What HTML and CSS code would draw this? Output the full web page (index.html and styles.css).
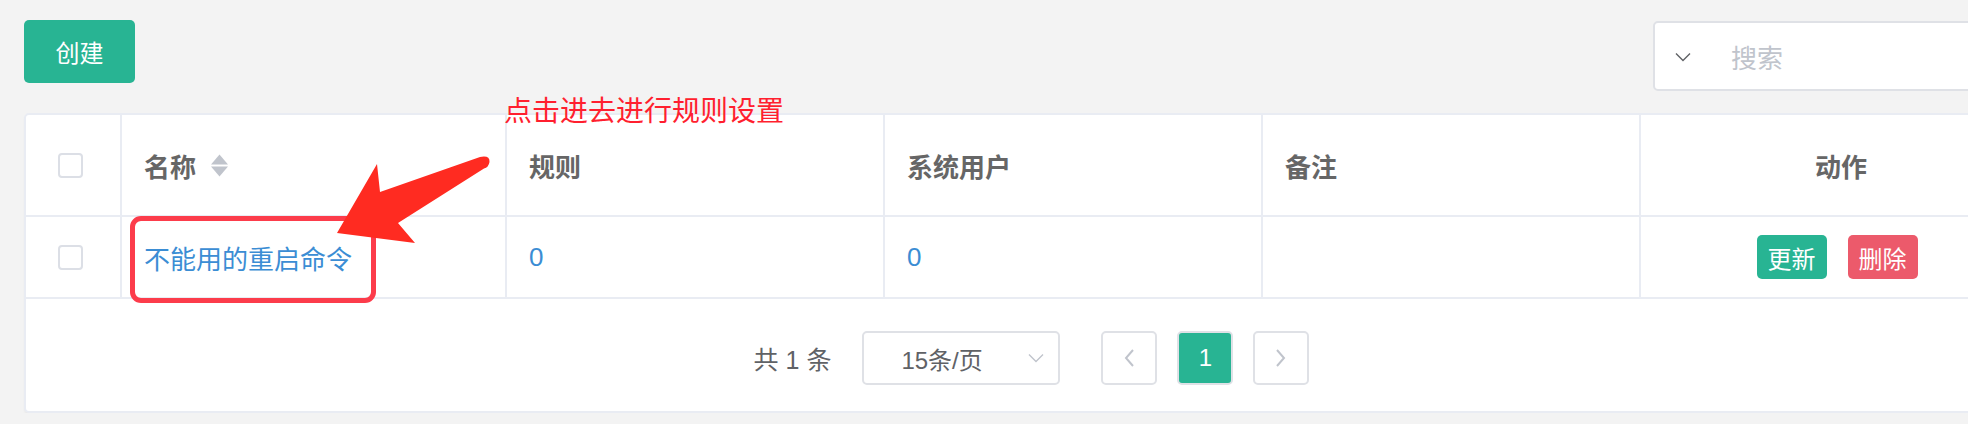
FILE: index.html
```html
<!DOCTYPE html>
<html lang="zh-CN">
<head>
<meta charset="utf-8">
<title>命令过滤</title>
<link rel="stylesheet" href="styles.css">
</head>
<body>
<div class="page">
  <div class="toolbar">
    <button class="btn-create">创建</button>
    <div class="search">
      <svg class="search-caret" width="16" height="10" viewBox="0 0 16 10"><path d="M1 1.5 L8 8.5 L15 1.5" fill="none" stroke="#606266" stroke-width="1.4"/></svg>
      <span class="search-ph">搜索</span>
    </div>
  </div>

  <div class="card">
    <div class="grid">
      <div class="th c-check"><span class="checkbox"></span></div>
      <div class="th">名称<svg class="sort" width="17" height="23" viewBox="0 0 17 23"><path d="M0 10.5 L8.5 0.5 L17 10.5 Z" fill="#c0c4cc"/><path d="M0 12.5 L17 12.5 L8.5 22.5 Z" fill="#c0c4cc"/></svg></div>
      <div class="th">规则</div>
      <div class="th">系统用户</div>
      <div class="th">备注</div>
      <div class="th c-center last">动作</div>

      <div class="td c-check"><span class="checkbox"></span></div>
      <div class="td"><a class="link">不能用的重启命令</a></div>
      <div class="td"><a class="link">0</a></div>
      <div class="td"><a class="link">0</a></div>
      <div class="td"></div>
      <div class="td c-center last actions"><button class="btn-sm green">更新</button><button class="btn-sm red">删除</button></div>
    </div>

    <div class="pager">
      <span class="total">共 1 条</span>
      <div class="size-select">
        <span>15条/页</span>
        <svg class="size-caret" width="16" height="10" viewBox="0 0 16 10"><path d="M1 1.5 L8 8.5 L15 1.5" fill="none" stroke="#c0c4cc" stroke-width="1.4"/></svg>
      </div>
      <div class="pages">
        <button class="pg"><svg width="12" height="20" viewBox="0 0 12 20"><path d="M10 2 L3 10 L10 18" fill="none" stroke="#c0c4cc" stroke-width="2"/></svg></button>
        <button class="pg active">1</button>
        <button class="pg"><svg width="12" height="20" viewBox="0 0 12 20"><path d="M2 2 L9 10 L2 18" fill="none" stroke="#c0c4cc" stroke-width="2"/></svg></button>
      </div>
    </div>
  </div>

  <div class="note">点击进去进行规则设置</div>
  <div class="highlight"></div>
  <svg class="arrow" width="165" height="100" viewBox="0 0 165 100"><path d="M150 7 Q160 5 159.5 12 Q158.5 17.5 154 18.5 L68 73 L85 93 L7 83 L47 14 L50 42 Z" fill="#ff2b21"/></svg>
</div>
</body>
</html>
```

FILE: styles.css
```css
html, body {
  margin: 0;
  padding: 0;
  overflow: hidden;
  background: #f3f3f3;
}

body {
  font-family: "Liberation Sans", "Noto Sans CJK SC", sans-serif;
  color: #606266;
}

.page {
  position: relative;
  width: 2019px;
  padding: 20px 0 0 24px;
}

.toolbar {
  display: flex;
  justify-content: space-between;
  align-items: flex-start;
  height: 71px;
  margin-bottom: 22px;
}

.btn-create {
  width: 111px;
  height: 63px;
  border: none;
  border-radius: 5px;
  background: #28b493;
  color: #fff;
  font-family: "Noto Sans CJK SC", sans-serif;
  font-size: 24px;
  padding: 0;
}

.search {
  margin-top: 1px;
  width: 390px;
  height: 70px;
  box-sizing: border-box;
  background: #fff;
  border: 2px solid #dfe1e6;
  border-radius: 5px;
  display: flex;
  align-items: center;
  padding-left: 20px;
}

.search-caret {
  margin-top: 2px;
}

.search-ph {
  margin-left: 40px;
  font-family: "Noto Sans CJK SC", sans-serif;
  font-size: 26px;
  color: #c0c4cc;
}

.card {
  background: #fff;
  border: 2px solid #e9ecf3;
  border-radius: 5px;
  box-shadow: 0 2px 2px rgba(0, 0, 0, 0.04);
}

.grid {
  display: grid;
  grid-template-columns: 96px 385px 378px 378px 378px 1fr;
  grid-template-rows: 102px 82px;
}

.th, .td {
  box-sizing: border-box;
  border-right: 2px solid #e9ecf3;
  border-bottom: 2px solid #e9ecf3;
  display: flex;
  align-items: center;
  padding-left: 22px;
  font-family: "Noto Sans CJK SC", sans-serif;
  font-size: 26px;
}

.th {
  font-weight: 700;
  color: #666;
}

.th.last, .td.last {
  border-right: none;
}

.c-check {
  padding-left: 32px;
}

.c-center {
  justify-content: center;
  padding-left: 0;
  padding-right: 0;
}

.td.actions {
  padding-right: 8px;
}

.checkbox {
  display: block;
  width: 25px;
  height: 25px;
  box-sizing: border-box;
  border: 2px solid #dcdfe6;
  border-radius: 4px;
  background: #fff;
}

.sort {
  margin-left: 15px;
}

.link {
  color: #3b8dd4;
  font-family: "Liberation Sans", "Noto Sans CJK SC", sans-serif;
}

.btn-sm {
  height: 44px;
  padding: 0 11px;
  border: none;
  border-radius: 5px;
  color: #fff;
  font-family: "Noto Sans CJK SC", sans-serif;
  font-size: 24px;
  margin: 0;
}

.btn-sm.green { background: #28b493; }
.btn-sm.red { background: #ec5a6b; margin-left: 21px; }

.pager {
  display: flex;
  justify-content: center;
  align-items: center;
  height: 112px;
  box-sizing: border-box;
  padding: 6px 4px 0 0;
}

.total {
  font-family: "Liberation Sans", "Noto Sans CJK SC", sans-serif;
  font-size: 25px;
  color: #606266;
  margin-right: 31px;
}

.size-select {
  width: 198px;
  height: 54px;
  box-sizing: border-box;
  border: 2px solid #dfe1e6;
  border-radius: 5px;
  display: flex;
  align-items: center;
  padding-left: 37px;
  font-size: 24px;
  color: #606266;
  font-family: "Liberation Sans", "Noto Sans CJK SC", sans-serif;
}

.size-caret {
  margin-left: auto;
  margin-right: 14px;
}

.pages {
  display: flex;
  gap: 20px;
  margin-left: 41px;
}

.pg {
  width: 56px;
  height: 54px;
  box-sizing: border-box;
  border: 2px solid #dfe1e6;
  border-radius: 5px;
  background: #fff;
  display: flex;
  align-items: center;
  justify-content: center;
  padding: 0;
  font-family: "Liberation Sans", sans-serif;
  font-size: 24px;
  color: #fff;
}

.pg.active {
  background: #28b493;
}

.note {
  position: absolute;
  left: 504px;
  top: 94px;
  font-family: "Noto Sans CJK SC", sans-serif;
  font-size: 28px;
  line-height: 30px;
  color: #ff1f2f;
  white-space: nowrap;
}

.highlight {
  position: absolute;
  left: 130px;
  top: 216px;
  width: 246px;
  height: 87px;
  box-sizing: border-box;
  border: 5px solid #fc3c4b;
  border-radius: 11px;
}

.arrow {
  position: absolute;
  left: 330px;
  top: 150px;
}
```
